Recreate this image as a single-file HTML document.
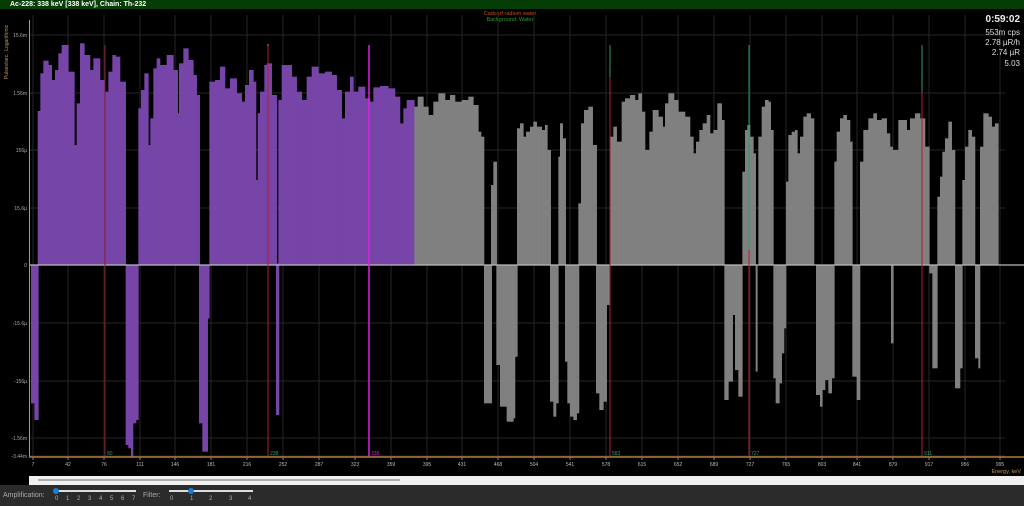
<!DOCTYPE html>
<html><head><meta charset="utf-8"><style>
html,body{margin:0;padding:0;width:1024px;height:506px;overflow:hidden;background:#000;font-family:"Liberation Sans",sans-serif}
#title{position:absolute;left:0;top:0;width:1024px;height:9px;background:#063d06;color:#fff;font-size:7px;font-weight:bold;line-height:9px;padding-left:10px;box-sizing:border-box}
#bot{position:absolute;left:0;top:485px;width:1024px;height:21px;background:#2b2b2b;color:#aaa;font-size:7px}
#bot i{position:absolute;top:11px;font-style:normal;font-size:6px}
</style></head><body>
<div id="title">Ac-228: 338 keV [338 keV], Chain: Th-232</div>
<svg id="s" width="1024" height="506" style="position:absolute;left:0;top:0" xmlns="http://www.w3.org/2000/svg"></svg>
<div id="bot">
<span style="position:absolute;left:3px;top:7px">Amplification:</span>
<div style="position:absolute;left:56px;top:5px;width:80px;height:2px;background:#ddd"></div>
<div style="position:absolute;left:53px;top:3px;width:6px;height:6px;border-radius:3px;background:#1a7fd4"></div>
<i style="left:55px">0</i><i style="left:66px">1</i><i style="left:77px">2</i><i style="left:88px">3</i><i style="left:99px">4</i><i style="left:110px">5</i><i style="left:121px">6</i><i style="left:132px">7</i>
<span style="position:absolute;left:143px;top:7px">Filter:</span>
<div style="position:absolute;left:169px;top:5px;width:84px;height:2px;background:#ddd"></div>
<div style="position:absolute;left:188px;top:3px;width:6px;height:6px;border-radius:3px;background:#1a7fd4"></div>
<i style="left:170px">0</i><i style="left:190px">1</i><i style="left:209px">2</i><i style="left:229px">3</i><i style="left:248px">4</i>
</div>
<script>
var s=document.getElementById('s'),h='';
function R(x,y,w,hh,c){h+='<rect x="'+x+'" y="'+y+'" width="'+w+'" height="'+hh+'" fill="'+c+'"/>';}
function L(x1,y1,x2,y2,c,w){h+='<line x1="'+x1+'" y1="'+y1+'" x2="'+x2+'" y2="'+y2+'" stroke="'+c+'" stroke-width="'+(w||1)+'"/>';}
function T(x,y,t,c,sz,a,b,tr){h+='<text x="'+x+'" y="'+y+'" fill="'+c+'" font-size="'+sz+'" text-anchor="'+(a||'start')+'" font-family="Liberation Sans, sans-serif"'+(b?' font-weight="bold"':'')+(tr?' transform="'+tr+'"':'')+'>'+t+'</text>';}
var ticks=[[7,33],[42,68],[76,104],[111,140],[146,175],[181,211],[216,247],[252,283],[287,319],[323,355],[359,391],[395,427],[431,462],[468,498],[504,534],[541,570],[578,606],[615,642],[652,678],[689,714],[727,750],[765,786],[803,822],[841,857],[879,893],[917,929],[956,965],[995,1000]];
var hy=[[35,'15.6m'],[93,'1.56m'],[150,'156µ'],[208,'15.6µ'],[265,'0'],[323,'-15.6µ'],[381,'-156µ'],[438,'-1.56m'],[456,'-3.44m']];
ticks.forEach(function(t){L(t[1],15,t[1],456,'#262626');});
hy.forEach(function(t){L(30,t[0],1005,t[0],'#262626');});
function draw(arr,ox,oy,col,neg){arr.forEach(function(a){var x=ox+a[0]/3,w=(a[1]-a[0])/3,y=oy+a[2]/3;if(!neg)R(x,y,w+0.3,265-y,col);else R(x,265,w+0.3,y-265,col);});}
var P='#7745a8',G='#808080';
var pp=[[38,46,243],[46,55,130],[55,70,92],[70,80,105],[80,90,150],[90,100,120],[100,110,70],[110,130,45],[130,148,125],[148,155,345],[155,165,220],[165,178,40],[178,195,75],[195,205,120],[205,225,85],[225,240,150],[240,250,185],[250,262,125],[262,272,75],[272,285,80],[285,302,155],[340,348,235],[348,358,180],[358,370,130],[370,376,345],[376,385,265],[385,395,115],[395,405,85],[405,425,105],[425,445,75],[445,458,120],[458,462,250],[462,475,100],[475,490,55],[490,505,90],[505,515,135],[515,524,195],[553,570,155],[570,585,150],[585,600,110],[600,615,175],[615,635,145],[635,650,190],[650,660,215],[660,672,165],[672,685,120],[685,693,155],[693,698,450],[698,705,250],[705,718,185],[718,725,105],[725,740,100],[740,755,195],[755,760,700],[760,770,210],[770,800,105],[800,815,140],[815,830,185],[830,845,210],[845,860,140],[860,880,110],[880,900,130],[900,920,125],[920,935,135],[935,950,180],[950,960,265],[960,975,185],[975,985,140],[985,1000,185],[1000,1020,170],[1020,1035,205],[1035,1045,215],[1045,1065,172],[1065,1090,168],[1090,1110,175],[1110,1125,200],[1125,1135,280],[1135,1145,235],[1145,1168,210]];
var pg=[[1168,1178,230],[1178,1195,200],[1195,1210,230],[1210,1225,255],[1225,1240,215],[1240,1260,190],[1260,1275,210],[1275,1290,195],[1290,1310,215],[1310,1330,210],[1330,1345,200],[1345,1360,225],[1360,1368,305],[1368,1377,320],[1398,1405,465],[1405,1415,395]];
var np=[[18,28,1120],[28,40,1170],[302,310,1245],[310,318,1255],[318,324,1280],[324,333,1180],[333,340,1170],[522,532,1180],[532,548,1265],[548,553,865],[753,762,1155]];
var ng=[[1377,1400,1120],[1414,1425,1005],[1425,1445,1130],[1445,1460,1175],[1460,1470,1165],[1470,1477,980]];
var p5=[[21,30,295],[30,40,280],[40,48,320],[48,60,305],[60,70,290],[70,80,275],[80,95,290],[95,105,300],[105,112,285],[112,122,360],[145,150,380],[150,158,280],[158,167,325],[205,213,520],[213,222,280],[222,235,240],[235,248,230],[248,260,345],[300,310,320],[310,320,290],[320,335,335],[335,345,215],[345,360,205],[360,375,195],[375,385,210],[385,395,190],[395,405,245],[405,418,360],[418,428,305],[428,445,240],[445,458,260],[458,465,290],[465,475,220],[475,492,190],[492,505,210],[505,525,245],[525,540,260],[540,550,320],[550,558,370],[558,568,335],[568,578,300],[578,590,280],[590,600,255],[600,610,310],[610,622,300],[622,635,220],[635,643,270],[697,705,425],[705,712,300],[712,720,285],[720,730,320],[730,737,370],[745,755,320],[755,765,230],[765,775,210],[775,782,215],[782,790,300],[828,835,455],[835,845,315],[845,855,305],[855,862,300],[862,870,370],[870,880,320],[880,890,260],[890,902,250],[902,912,265],[973,980,395],[980,990,305],[990,1000,265],[1000,1010,255],[1010,1020,270],[1020,1027,335],[1050,1060,395],[1060,1075,300],[1075,1090,265],[1090,1100,250],[1100,1115,270],[1115,1130,265],[1130,1140,310],[1140,1148,350],[1148,1165,360],[1165,1190,270],[1190,1200,300],[1200,1215,265],[1215,1230,250],[1230,1245,265],[1245,1258,350],[1282,1290,500],[1290,1297,440],[1297,1305,365],[1305,1315,325],[1315,1325,275],[1325,1335,360],[1357,1365,450],[1365,1375,350],[1375,1385,300],[1385,1395,320],[1410,1420,350],[1420,1435,250],[1435,1445,260],[1445,1455,290],[1455,1465,280]];
var n5=[[0,10,1175],[10,20,980],[120,130,1115],[130,138,1160],[138,145,1120],[165,172,995],[172,180,1120],[180,190,1160],[190,200,1170],[200,207,1150],[258,268,1090],[268,280,1140],[280,290,1115],[290,300,825],[643,655,1110],[655,668,1055],[668,675,855],[675,685,1020],[685,697,1100],[737,742,1025],[790,797,1045],[797,808,1120],[808,815,1060],[815,822,970],[822,828,895],[918,930,1095],[930,937,1130],[937,945,1080],[945,955,1050],[955,965,1090],[965,973,1045],[1027,1040,1040],[1040,1050,1110],[1143,1150,940],[1258,1267,730],[1267,1282,1015],[1335,1350,1075],[1350,1357,1015],[1395,1405,985],[1405,1410,1015]];
draw(pp,25,30,P);draw(pg,25,30,G);draw(np,25,30,P,1);draw(ng,25,30,G,1);draw(p5,510,30,G);draw(n5,510,30,G,1);
L(30,265,1024,265,'#bbb',1.2);
L(105,45,105,456,'#8a1a2a');T(107,455,'80','#2a9a6a',5);
L(268,45,268,456,'#b02030');h+='<circle cx="268" cy="45" r="1" fill="#d03040"/>';T(270,455,'238','#2a9a6a',5);
L(369,45,369,456,'#e020e0',1.5);T(371,455,'338','#d020d0',5);
L(610,45,610,77,'#2a9a6a');L(610,77,610,456,'#b02030');T(612,455,'583','#2a9a6a',5);
L(749,45,749,250,'#2a9a6a');L(749,250,749,456,'#b02030');T(751,455,'727','#2a9a6a',5);
L(922,45,922,92,'#2a9a6a');L(922,92,922,456,'#b02030');T(924,455,'911','#2a9a6a',5);
L(29.5,20,29.5,457,'#c8955a');L(29,457,1024,457,'#b07840',1.5);
hy.forEach(function(t){T(27,t[0]+2,t[1],'#aaa',5,'end');});
ticks.forEach(function(t){L(t[1],457,t[1],460,'#b07840');T(t[1],466,t[0],'#bbb',5,'middle');});
T(1021,473,'Energy, keV','#c8955a',5.5,'end');
T(8,52,'Pulses/sec., Logarithmic','#c8955a',5,'middle',0,'rotate(-90 8 52)');
T(510,15,'Cadcorf radium water','#c0501a',5.5,'middle');T(510,21,'Background: Water','#2a9a2a',5.5,'middle');
T(1020,22,'0:59:02','#eee',10,'end',1);T(1020,35,'553m cps','#ddd',8,'end');T(1020,45,'2.78 µR/h','#ddd',8,'end');T(1020,55,'2.74 µR','#ddd',8,'end');T(1020,66,'5.03','#ddd',8,'end');
R(29,476,995,9,'#f0f0f0');L(38,480,400,480,'#999',1.5);
s.innerHTML=h;
</script>
</body></html>
